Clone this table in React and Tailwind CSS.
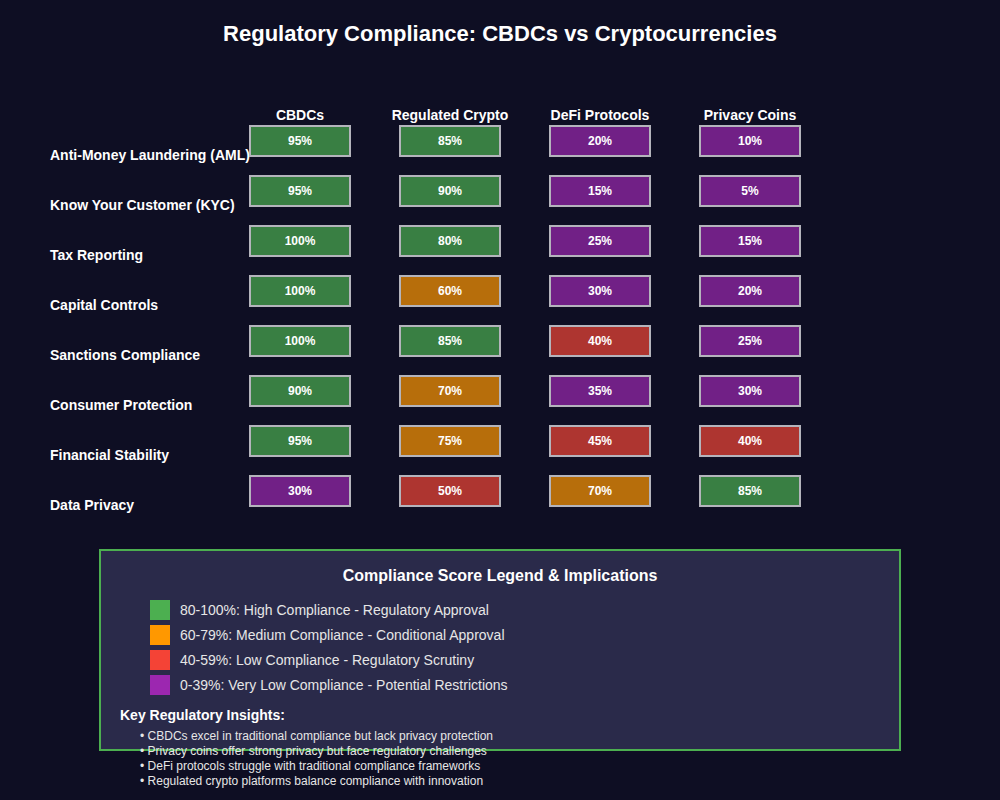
const columns = ["CBDCs", "Regulated Crypto", "DeFi Protocols", "Privacy Coins"]

const rows = [
    { label: "Anti-Money Laundering (AML)", scores: [95, 85, 20, 10] },
    { label: "Know Your Customer (KYC)", scores: [95, 90, 15, 5] },
    { label: "Tax Reporting", scores: [100, 80, 25, 15] },
    { label: "Capital Controls", scores: [100, 60, 30, 20] },
    { label: "Sanctions Compliance", scores: [100, 85, 40, 25] },
    { label: "Consumer Protection", scores: [90, 70, 35, 30] },
    { label: "Financial Stability", scores: [95, 75, 45, 40] },
    { label: "Data Privacy", scores: [30, 50, 70, 85] },
]

const legend = [
    { color: "bg-[#4caf50]", text: "80-100%: High Compliance - Regulatory Approval" },
    { color: "bg-[#ff9800]", text: "60-79%: Medium Compliance - Conditional Approval" },
    { color: "bg-[#f44336]", text: "40-59%: Low Compliance - Regulatory Scrutiny" },
    { color: "bg-[#9c27b0]", text: "0-39%: Very Low Compliance - Potential Restrictions" },
]

const insights = [
    "CBDCs excel in traditional compliance but lack privacy protection",
    "Privacy coins offer strong privacy but face regulatory challenges",
    "DeFi protocols struggle with traditional compliance frameworks",
    "Regulated crypto platforms balance compliance with innovation",
]

// score -> fill colour (legend colours at 70% over the dark background)
const cellColor = (score) => {
    if (score >= 80) return "bg-[#397f43]"
    if (score >= 60) return "bg-[#b76e0b]"
    if (score >= 40) return "bg-[#ae3530]"
    return "bg-[#712086]"
}

const App = () => {
    return (
        <div className="w-[1000px] h-[800px] bg-[#0e0e23] text-white overflow-hidden font-['Liberation_Sans',Arial,sans-serif]">
            <h1 className="pt-[21px] text-center text-[22px] leading-[26px] font-bold">Regulatory Compliance: CBDCs vs Cryptocurrencies</h1>

            <div className="mt-[60px] flex pl-[250px] h-[16px]">
                {columns.map((c) => (
                    <div className="w-[150px]" key={c}>
                        <div className="w-[100px] flex justify-center whitespace-nowrap text-[14px] leading-[16px] font-bold">{c}</div>
                    </div>
                ))}
            </div>

            <div className="mt-[2px]">
                {rows.map((r) => (
                    <div className="flex h-[50px] pl-[50px]" key={r.label}>
                        <div className="w-[200px] pt-[22px] text-[14px] leading-[16px] font-bold whitespace-nowrap">{r.label}</div>
                        {r.scores.map((s, i) => (
                            <div className="w-[150px]" key={i}>
                                <div className={`w-[102px] h-[32px] -ml-[1px] border-2 border-[#b4b4bc] flex items-center justify-center text-[12px] font-bold ${cellColor(s)}`}>{s}%</div>
                            </div>
                        ))}
                    </div>
                ))}
            </div>

            <div className="mt-[24px] ml-[99px] w-[802px] h-[202px] border-2 border-[#4caf50] bg-[#2a2a4a]">
                <h2 className="pt-[15px] text-center text-[16px] leading-[20px] font-bold">Compliance Score Legend &amp; Implications</h2>
                <div className="mt-[14px] pl-[49px]">
                    {legend.map((l) => (
                        <div className="flex items-start h-[25px]" key={l.text}>
                            <div className={`w-[20px] h-[20px] ${l.color}`}></div>
                            <span className="ml-[10px] text-[14px] leading-[20px] text-[#e6e6e6]">{l.text}</span>
                        </div>
                    ))}
                </div>
                <p className="mt-[7px] pl-[19px] text-[14px] leading-[16px] font-bold">Key Regulatory Insights:</p>
                <ul className="mt-[6px] pl-[39px]">
                    {insights.map((t) => (
                        <li className="text-[12px] leading-[15px] text-[#e6e6e6] whitespace-nowrap" key={t}>• {t}</li>
                    ))}
                </ul>
            </div>
        </div>
    )
}

export default App
